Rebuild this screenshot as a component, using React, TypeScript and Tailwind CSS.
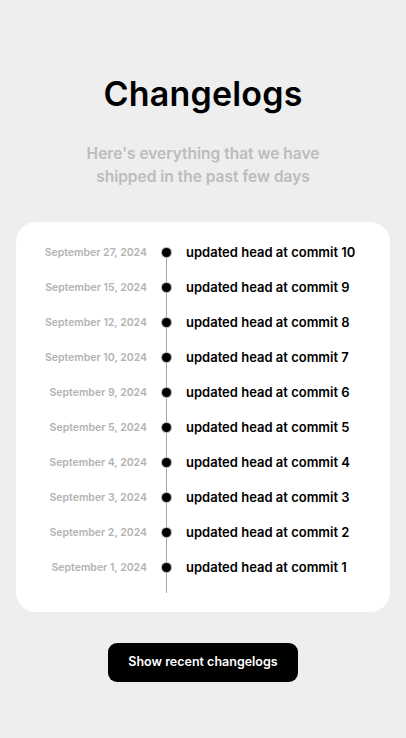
import React from 'react';

const logs = [
  { date: 'September 27, 2024', title: 'updated head at commit 10' },
  { date: 'September 15, 2024', title: 'updated head at commit 9' },
  { date: 'September 12, 2024', title: 'updated head at commit 8' },
  { date: 'September 10, 2024', title: 'updated head at commit 7' },
  { date: 'September 9, 2024', title: 'updated head at commit 6' },
  { date: 'September 5, 2024', title: 'updated head at commit 5' },
  { date: 'September 4, 2024', title: 'updated head at commit 4' },
  { date: 'September 3, 2024', title: 'updated head at commit 3' },
  { date: 'September 2, 2024', title: 'updated head at commit 2' },
  { date: 'September 1, 2024', title: 'updated head at commit 1' },
];

export default function App() {
  return (
    <div
      className="min-h-screen bg-[#eeeeee] flex flex-col items-center pt-[74px]"
      style={{ fontFamily: "Inter, 'Noto Sans', sans-serif" }}
    >
      <h1 className="text-[34px] font-semibold text-black leading-[40px] tracking-[0.2px]">Changelogs</h1>

      <p className="mt-[28px] text-[15.5px] font-semibold text-[#bcbcbc] text-center leading-[23px] w-[250px]">
        Here's everything that we have shipped in the past few days
      </p>

      {/* Timeline card */}
      <div className="mt-[34px] w-[374px] bg-white rounded-[20px] pt-[13px] pb-[19px]">
        <div className="relative pb-[8px]">
          {/* vertical line */}
          <div className="absolute left-[150px] top-[17px] bottom-0 w-px bg-[#a8a8a8]" />
          {logs.map((log) => (
            <div key={log.title} className="flex items-center h-[35px]">
              <div className="w-[131px] text-right text-[10.5px] font-semibold text-[#b3b3b3] whitespace-nowrap">
                {log.date}
              </div>
              <div className="w-[39px] flex justify-center">
                <div className="relative w-[9px] h-[9px] rounded-full bg-black ring-1 ring-[#b0b0b0]" />
              </div>
              <div className="text-[13px] font-semibold text-black whitespace-nowrap">{log.title}</div>
            </div>
          ))}
        </div>
      </div>

      <button className="mt-[31px] h-[39px] w-[190px] rounded-[9px] bg-black text-white text-[12.5px] font-semibold">
        Show recent changelogs
      </button>
    </div>
  );
}
